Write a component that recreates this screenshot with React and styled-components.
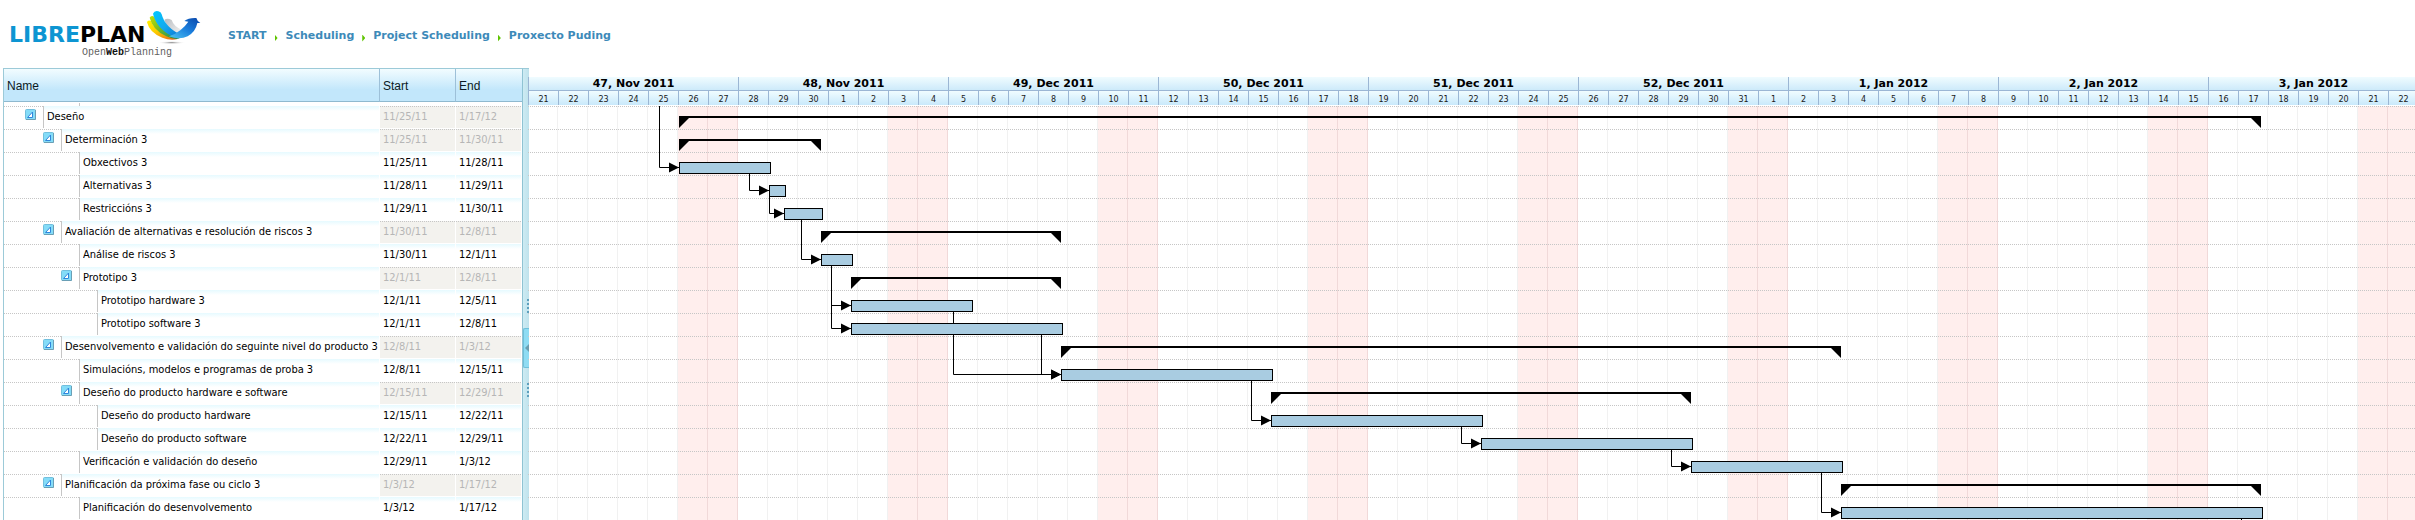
import React from "react";
import styled, { createGlobalStyle, css } from "styled-components";

const ROW = 23;
const DAY = 30;
const DATA_FONT = '"DejaVu Sans Condensed", "DejaVu Sans", sans-serif';
const UI_FONT = '"DejaVu Sans", Verdana, sans-serif';

const GlobalStyle = createGlobalStyle`
  * { box-sizing: border-box; }
  body { margin: 0; background: #fff; color: #000; font: 11px/13px ${UI_FONT}; }
  button, input { font: inherit; color: inherit; border: 0; margin: 0; padding: 0; border-radius: 0; }
`;

/* name, tree level, start, end, bar offset and bar end in chart pixels */
const tasks = [
  { name: "Deseño", level: 0, start: "11/25/11", end: "1/17/12", from: 151, to: 1733, group: true },
  { name: "Determinación 3", level: 1, start: "11/25/11", end: "11/30/11", from: 151, to: 293, group: true },
  { name: "Obxectivos 3", level: 2, start: "11/25/11", end: "11/28/11", from: 151, to: 243 },
  { name: "Alternativas 3", level: 2, start: "11/28/11", end: "11/29/11", from: 241, to: 258 },
  { name: "Restriccións 3", level: 2, start: "11/29/11", end: "11/30/11", from: 256, to: 295 },
  { name: "Avaliación de alternativas e resolución de riscos 3", level: 1, start: "11/30/11", end: "12/8/11", from: 293, to: 533, group: true },
  { name: "Análise de riscos 3", level: 2, start: "11/30/11", end: "12/1/11", from: 293, to: 325 },
  { name: "Prototipo 3", level: 2, start: "12/1/11", end: "12/8/11", from: 323, to: 533, group: true },
  { name: "Prototipo hardware 3", level: 3, start: "12/1/11", end: "12/5/11", from: 323, to: 445 },
  { name: "Prototipo software 3", level: 3, start: "12/1/11", end: "12/8/11", from: 323, to: 535 },
  { name: "Desenvolvemento e validación do seguinte nivel do producto 3", level: 1, start: "12/8/11", end: "1/3/12", from: 533, to: 1313, group: true },
  { name: "Simulacións, modelos e programas de proba 3", level: 2, start: "12/8/11", end: "12/15/11", from: 533, to: 745 },
  { name: "Deseño do producto hardware e software", level: 2, start: "12/15/11", end: "12/29/11", from: 743, to: 1163, group: true },
  { name: "Deseño do producto hardware", level: 3, start: "12/15/11", end: "12/22/11", from: 743, to: 955 },
  { name: "Deseño do producto software", level: 3, start: "12/22/11", end: "12/29/11", from: 953, to: 1165 },
  { name: "Verificación e validación do deseño", level: 2, start: "12/29/11", end: "1/3/12", from: 1163, to: 1315 },
  { name: "Planificación da próxima fase ou ciclo 3", level: 1, start: "1/3/12", end: "1/17/12", from: 1313, to: 1733, group: true },
  { name: "Planificación do desenvolvemento", level: 2, start: "1/3/12", end: "1/17/12", from: 1313, to: 1735 },
];

/* x of the vertical part, source row (-1: above the visible rows), target row */
const links = [
  { x: 131, from: -1, to: 2 },
  { x: 221, from: 2, to: 3 },
  { x: 241, from: 3, to: 4 },
  { x: 273, from: 4, to: 6 },
  { x: 303, from: 6, to: 8 },
  { x: 303, from: 6, to: 9 },
  { x: 425, from: 8, to: 11 },
  { x: 513, from: 9, to: 11 },
  { x: 723, from: 11, to: 13 },
  { x: 933, from: 13, to: 14 },
  { x: 1143, from: 14, to: 15 },
  { x: 1293, from: 15, to: 17 },
  { x: 1713, from: 17, to: 18 },
];

const weeks = [
  { label: "47, Nov 2011", days: [21, 22, 23, 24, 25, 26, 27] },
  { label: "48, Nov 2011", days: [28, 29, 30, 1, 2, 3, 4] },
  { label: "49, Dec 2011", days: [5, 6, 7, 8, 9, 10, 11] },
  { label: "50, Dec 2011", days: [12, 13, 14, 15, 16, 17, 18] },
  { label: "51, Dec 2011", days: [19, 20, 21, 22, 23, 24, 25] },
  { label: "52, Dec 2011", days: [26, 27, 28, 29, 30, 31, 1] },
  { label: "1, Jan 2012", days: [2, 3, 4, 5, 6, 7, 8] },
  { label: "2, Jan 2012", days: [9, 10, 11, 12, 13, 14, 15] },
  { label: "3, Jan 2012", days: [16, 17, 18, 19, 20, 21, 22] },
];

const dots = css`
  background-image: repeating-linear-gradient(90deg, #c6c6c6 0 1px, transparent 1px 2px);
  background-size: 100% 1px;
  background-repeat: no-repeat;
`;

const Page = styled.div`
  display: flex;
  flex-direction: column;
  min-height: 100vh;
`;

const Header = styled.header`
  display: flex;
  align-items: flex-start;
  height: 68px;
  padding-left: 9px;
`;

const Logo = styled.div`
  display: grid;
  grid-template-columns: auto auto;
  width: 219px;
  padding-top: 11px;
  justify-content: start;
`;

const Brand = styled.div`
  font: bold 22px/24px ${UI_FONT};
  padding-top: 12px;
  width: 138px;
  white-space: nowrap;
  & span { color: #0d95d2; }
`;

const Tagline = styled.div`
  grid-column: 1 / -1;
  padding-left: 73px;
  font: 10px/12px "Liberation Mono", monospace;
  color: #5f5f5f;
  & b { color: #111; }
`;

const Crumbs = styled.nav`
  display: flex;
  align-items: center;
  gap: 8px;
  padding-top: 29px;
  font-weight: bold;
  line-height: 14px;
`;

const Crumb = styled.a`
  color: #3d8ab9;
  text-decoration: none;
`;

const CrumbArrow = styled.span`
  width: 3px;
  height: 7px;
  margin-top: 4px;
  background: #5fc400;
  clip-path: polygon(0 0, 100% 50%, 0 100%);
`;

const Planner = styled.main`
  display: flex;
  flex: 1;
  padding-left: 3px;
  overflow: hidden;
`;

const TreePane = styled.section`
  flex: none;
  border-top: 1px solid #9ccad8;
  border-left: 1px solid #9ccad8;
`;

const Tree = styled.table`
  table-layout: fixed;
  width: 518px;
  border-collapse: separate;
  border-spacing: 0;
  font: 11px/13px ${DATA_FONT};
`;

const HeadCell = styled.th`
  width: ${(p) => p.$width}px;
  height: 33px;
  padding: 2px 3px 0;
  text-align: left;
  font: 12px/14px "Liberation Sans", Arial, sans-serif;
  color: #0b1a24;
  background: linear-gradient(#f2fcff, #c2e7fb 65%);
  border-bottom: 1px solid #8fb9cf;
  border-right: ${(p) => (p.$last ? 0 : 1)}px solid #9dc0d8;
`;

const CutRow = styled.tr`
  height: 4px;
  & td { padding: 0; }
  & i {
    display: block;
    width: 1px;
    height: 3px;
    margin-left: 75px;
    background: #c8c8c8;
  }
`;

const TaskRow = styled.tr`
  height: ${ROW}px;
  ${dots}
`;

const Cell = styled.td`
  padding: 0 1px 1px 0;
`;

const NameBox = styled.div`
  display: flex;
`;

const Indent = styled.div`
  flex: none;
  display: flex;
  justify-content: flex-end;
  width: ${(p) => 39 + 18 * p.$level}px;
  padding: 3px 7px 0 0;
`;

const Toggle = styled.button`
  width: 11px;
  height: 11px;
  background: none;
  cursor: pointer;
  & svg { display: block; }
`;

const Field = styled.input`
  display: block;
  width: 100%;
  min-width: 0;
  height: 22px;
  padding: 0 0 1px 3px;
  outline: 0;
  background: linear-gradient(#e6faff, #fff 5px);
  ${(p) => p.$name && css`border-left: 1px solid #c6c6c6;`}
  &:disabled {
    color: #b6b6b6;
    background-color: #f3f2ee;
    ${dots}
  }
`;

const Splitter = styled.div`
  flex: none;
  display: flex;
  flex-direction: column;
  align-items: flex-end;
  gap: 15px;
  width: 7px;
  margin-right: -1px;
  padding-top: 230px;
  border-top: 1px solid #9ccad8;
  border-left: 1px solid #8fc3d3;
  background: linear-gradient(90deg, #cdebf3, #bfe2ec);
`;

const Grip = styled.div`
  width: 2px;
  height: 14px;
  background: repeating-linear-gradient(#5d9fbd 0 2px, transparent 2px 4px);
`;

const Collapse = styled.button`
  display: flex;
  align-items: center;
  justify-content: flex-end;
  width: 6px;
  height: 40px;
  border: 1px solid #6fc0da;
  border-right: 0;
  border-radius: 2px 0 0 2px;
  background: #8fdcf3;
  cursor: pointer;
  &::before {
    content: "";
    width: 4px;
    height: 8px;
    background: #6a9db0;
    clip-path: polygon(100% 0, 0 50%, 100% 100%);
  }
`;

const ChartPane = styled.section`
  flex: 1;
  min-width: 0;
  padding-top: 9px;
  overflow: hidden;
`;

const Scale = styled.div`
  display: flex;
  margin-bottom: 1px;
`;

const Week = styled.div`
  flex: none;
  width: ${7 * DAY}px;
`;

const WeekLabel = styled.div`
  height: 14px;
  border-left: 1px solid #9bb6d4;
  border-bottom: 1px solid #9bb6d4;
  background: linear-gradient(#f0fcff, #cdeafa);
  font-weight: bold;
  line-height: 13px;
  text-align: center;
`;

const Days = styled.div`
  display: flex;
`;

const Day = styled.div`
  width: ${DAY}px;
  height: 14px;
  border-left: 1px solid #9bb6d4;
  background: linear-gradient(#f0fcff, #c9e9fb);
  font-size: 8px;
  line-height: 17px;
  text-align: center;
  color: #1a1a1a;
`;

const Chart = styled.div`
  position: relative;
`;

const Grid = styled.div`
  position: absolute;
  inset: 0;
  display: flex;
`;

const GridDay = styled.div`
  flex: none;
  width: ${DAY}px;
  border-right: 1px solid ${(p) => (p.$off ? "#f1d9d9" : "#f1f1f1")};
  background: ${(p) => (p.$off ? "#ffeeed" : "transparent")};
`;

const Links = styled.svg`
  position: absolute;
  inset: 0;
  width: 100%;
  height: 100%;
`;

const Lane = styled.div`
  position: relative;
  height: ${ROW}px;
  padding-top: 10px;
  ${dots}
`;

const TaskBar = styled.div`
  height: 12px;
  border: 1px solid #000;
  background: #a9cce1;
`;

const SummaryBar = styled.div`
  display: flex;
  justify-content: space-between;
  height: 12px;
  background: linear-gradient(#000, #000) top / 100% 2px no-repeat;
  &::before, &::after {
    content: "";
    width: 12px;
    height: 12px;
    background: #000;
    clip-path: polygon(0 0, 100% 0, 0 100%);
  }
  &::after { clip-path: polygon(0 0, 100% 0, 100% 100%); }
`;

function Bird() {
  return (
    <svg width="54" height="34" viewBox="0 0 162 102" aria-hidden="true">
      <defs>
        <linearGradient id="yellow" x1="0" y1="0" x2="1" y2="1">
          <stop offset="0" stopColor="#fff200" />
          <stop offset="0.45" stopColor="#fccb00" />
          <stop offset="1" stopColor="#e2591b" />
        </linearGradient>
        <linearGradient id="green" x1="0" y1="0" x2="1" y2="1">
          <stop offset="0" stopColor="#c6e000" />
          <stop offset="0.5" stopColor="#67b52c" />
          <stop offset="1" stopColor="#178a5a" />
        </linearGradient>
        <linearGradient id="cyan" x1="0" y1="0" x2="1" y2="1">
          <stop offset="0" stopColor="#00c8ff" />
          <stop offset="0.5" stopColor="#14a9ee" />
          <stop offset="1" stopColor="#0b6fcf" />
        </linearGradient>
        <linearGradient id="body" x1="0" y1="1" x2="1" y2="0">
          <stop offset="0" stopColor="#4fc6f2" />
          <stop offset="0.5" stopColor="#1b7fdd" />
          <stop offset="1" stopColor="#0a45a8" />
        </linearGradient>
        <linearGradient id="silver" x1="0" y1="0" x2="1" y2="1">
          <stop offset="0" stopColor="#b9bcc0" />
          <stop offset="1" stopColor="#f4f4f4" />
        </linearGradient>
        <radialGradient id="shade">
          <stop offset="0" stopColor="#8a8a8a" />
          <stop offset="1" stopColor="#fff" stopOpacity="0" />
        </radialGradient>
      </defs>
      <ellipse cx="74" cy="95" rx="42" ry="5" fill="url(#shade)" />
      <path d="M52 27 Q60 20 74 27 Q80 46 104 56 L82 70 Q60 52 52 27Z" fill="url(#silver)" />
      <path d="M0 34 Q2 26 12 30 Q20 60 92 84 Q70 90 46 80 Q8 66 0 34Z" fill="url(#yellow)" />
      <path d="M8 20 Q12 12 22 17 Q34 56 98 82 Q84 88 58 76 Q16 56 8 20Z" fill="url(#green)" />
      <path d="M18 8 Q22 -2 34 1 Q42 2 44 10 Q54 50 106 74 Q98 84 76 76 Q28 52 18 8Z" fill="url(#cyan)" />
      <path d="M66 76 Q104 62 124 32 L112 30 Q124 20 148 21 Q150 30 160 36 L151 36 Q146 62 122 76 Q98 88 66 76Z" fill="url(#body)" />
    </svg>
  );
}

function ToggleIcon() {
  return (
    <svg width="11" height="11" viewBox="0 0 11 11" aria-hidden="true">
      <rect x="0.5" y="0.5" width="10" height="10" rx="1" fill="#84dcf8" stroke="#72bfdd" />
      <path d="M1 10.5H10.5V1" fill="none" stroke="#6a9fb5" />
      <path d="M2.5 8.5L7.5 3V8.5Z" fill="#fff" stroke="#2f86dc" />
    </svg>
  );
}

function Link({ link }) {
  const top = link.from < 0 ? 0 : link.from * ROW + 22;
  const y = link.to * ROW + 15;
  const target = tasks[link.to];
  if (!target) return <path d={`M${link.x + 0.5} ${top}V${y}`} stroke="#000" fill="none" />;
  const x = target.from;
  return (
    <>
      <path d={`M${link.x + 0.5} ${top}V${y + 0.5}H${x}`} stroke="#000" fill="none" />
      <path d={`M${x - 10} ${y - 4.5}L${x} ${y + 0.5}L${x - 10} ${y + 5.5}Z`} />
    </>
  );
}

const crumbs = ["START", "Scheduling", "Project Scheduling", "Proxecto Puding"];

export default function App() {
  return (
    <>
      <GlobalStyle />
      <Page>
        <Header>
          <Logo>
            <Brand><span>LIBRE</span>PLAN</Brand>
            <Bird />
            <Tagline>Open<b>Web</b>Planning</Tagline>
          </Logo>
          <Crumbs aria-label="Breadcrumb">
            {crumbs.map((text, i) => (
              <React.Fragment key={text}>
                {i > 0 && <CrumbArrow />}
                <Crumb href="#">{text}</Crumb>
              </React.Fragment>
            ))}
          </Crumbs>
        </Header>
        <Planner>
          <TreePane>
            <Tree>
              <thead>
                <tr>
                  <HeadCell $width={376}>Name</HeadCell>
                  <HeadCell $width={76}>Start</HeadCell>
                  <HeadCell $width={66} $last>End</HeadCell>
                </tr>
              </thead>
              <tbody>
                <CutRow><td colSpan={3}><i /></td></CutRow>
                {tasks.map((t) => (
                  <TaskRow key={t.name}>
                    <Cell>
                      <NameBox>
                        <Indent $level={t.level}>
                          {t.group && (
                            <Toggle type="button" aria-label={`Collapse ${t.name}`}>
                              <ToggleIcon />
                            </Toggle>
                          )}
                        </Indent>
                        <Field $name defaultValue={t.name} aria-label="Name" />
                      </NameBox>
                    </Cell>
                    <Cell><Field defaultValue={t.start} disabled={t.group} aria-label="Start" /></Cell>
                    <Cell><Field defaultValue={t.end} disabled={t.group} aria-label="End" /></Cell>
                  </TaskRow>
                ))}
              </tbody>
            </Tree>
          </TreePane>
          <Splitter>
            <Grip />
            <Collapse type="button" aria-label="Collapse task list" />
            <Grip />
          </Splitter>
          <ChartPane>
            <Scale>
              {weeks.map((w) => (
                <Week key={w.label}>
                  <WeekLabel>{w.label}</WeekLabel>
                  <Days>{w.days.map((d) => <Day key={d}>{d}</Day>)}</Days>
                </Week>
              ))}
            </Scale>
            <Chart>
              <Grid>
                {weeks.map((w) => w.days.map((d, i) => <GridDay key={`${w.label}-${d}`} $off={i > 4} />))}
              </Grid>
              <Links aria-hidden="true">
                {links.map((l) => <Link key={`${l.x}-${l.to}`} link={l} />)}
              </Links>
              {tasks.map((t) => {
                const Bar = t.group ? SummaryBar : TaskBar;
                return (
                  <Lane key={t.name}>
                    <Bar style={{ marginLeft: t.from, width: t.to - t.from }} />
                  </Lane>
                );
              })}
            </Chart>
          </ChartPane>
        </Planner>
      </Page>
    </>
  );
}
